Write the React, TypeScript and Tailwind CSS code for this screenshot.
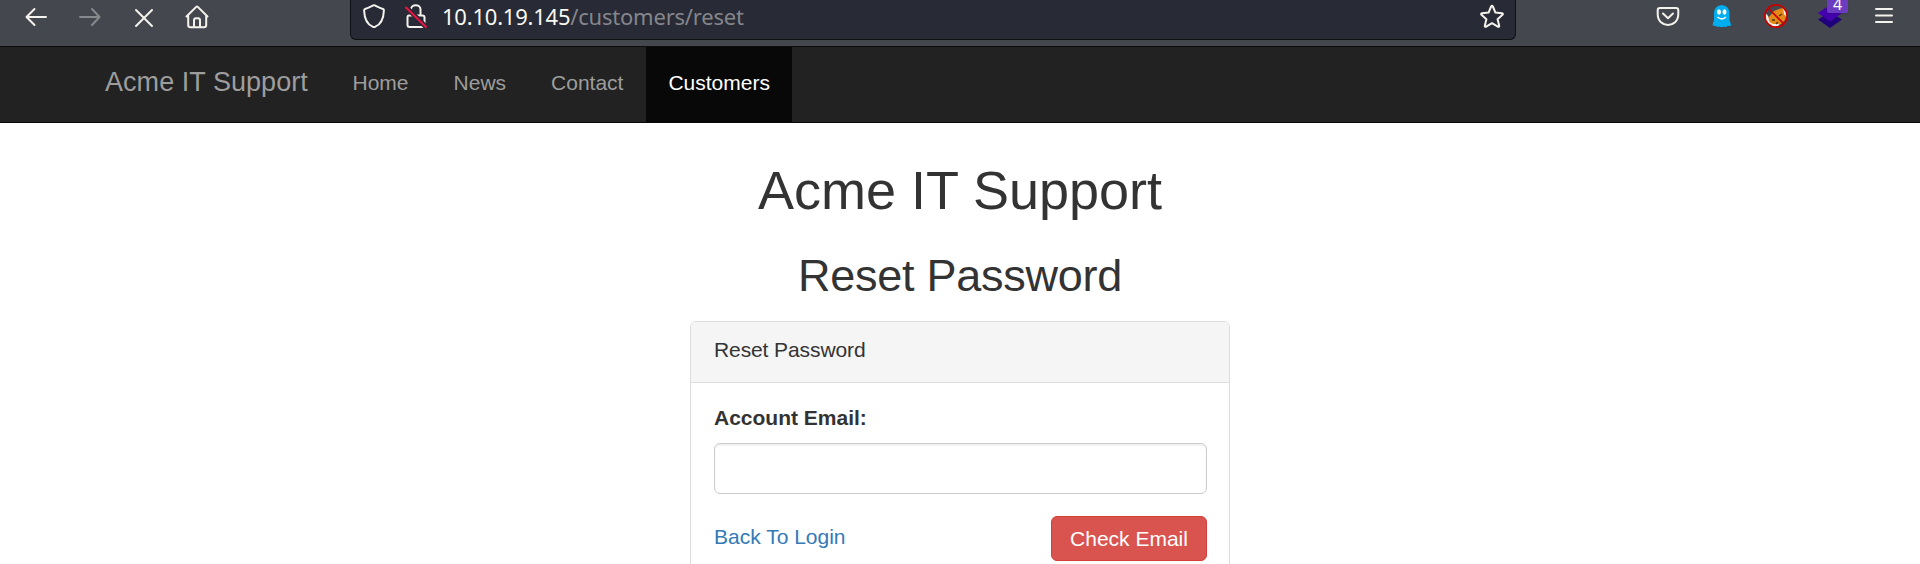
import React from "react";

const navItems = [
  { label: "Home", active: false },
  { label: "News", active: false },
  { label: "Contact", active: false },
  { label: "Customers", active: true },
];

const stroke = {
  fill: "none",
  stroke: "#f4f2ec",
  strokeWidth: 2,
  strokeLinecap: "round" as const,
  strokeLinejoin: "round" as const,
};

function BrowserBar() {
  return (
    <header className="flex h-[47px] items-start border-b border-[#0c0c0d] bg-[#44474e] font-['Noto_Sans',sans-serif]">
      <div className="flex w-[350px] shrink-0 pl-6">
        <svg className="mr-[30px] h-[34px] w-6" viewBox="0 0 24 34" {...stroke}>
          <path d="M22 17H2.500M10.500 9L2.500 17L10.500 25" />
        </svg>
        <svg className="mr-[30px] h-[34px] w-6" viewBox="0 0 24 34" {...stroke} stroke="#88898c">
          <path d="M2 17H21.500M14 9L21.500 17L14 25" />
        </svg>
        <svg className="mr-[29px] h-[34px] w-6" viewBox="0 0 24 34" {...stroke}>
          <path d="M4 10L20 26M20 10L4 26" />
        </svg>
        <svg className="h-[34px] w-6" viewBox="0 0 24 34" {...stroke}>
          <path d="M1.500 16.500L11.200 6.900Q12 6.100 12.800 6.900L22.500 16.500M3.200 15.500V25Q3.200 27.200 5.500 27.200H19Q21.200 27.200 21.200 25V15.500M9 27V20.500Q9 18.300 11 18.300H13Q15 18.300 15 20.500V27" />
        </svg>
      </div>
      <div className="flex h-10 w-[1166px] shrink-0 rounded-b-[6px] border border-t-0 border-[#0f1014] bg-[#282a36] pl-[11px] pr-[11px]">
        <svg className="h-[34px] w-6" viewBox="0 0 24 34" {...stroke}>
          <path d="M12 5.200C13 5.200 17 7.600 21 9Q21.900 9.300 21.900 10.500C21.600 18 18.600 24.500 13.300 26.700Q12 27.200 10.700 26.700C5.400 24.500 2.400 18 2.100 10.500Q2.100 9.300 3 9C7 7.600 11 5.200 12 5.200Z" />
        </svg>
        <svg className="ml-[18px] h-[34px] w-6" viewBox="0 0 24 34" {...stroke}>
          <path d="M7 15V9.500C7 3.800 16.500 3.800 16.500 9.500V15M5 15.500H18.500Q20.500 15.500 20.500 17.500V25Q20.500 27 18.500 27H5.500Q3.500 27 3.500 25V17.500Q3.500 15.500 5 15.500" />
          <path d="M1 6L23 28" stroke="#282a36" strokeWidth="5" />
          <path d="M2 7.500L22 27" stroke="#ef1242" />
        </svg>
        <p className="ml-[14px] flex-1 text-[22px] leading-[33px] tracking-[-0.22px] text-[#85868b]">
          <span className="text-[#f8f8f2]">10.10.19.145</span>/customers/reset
        </p>
        <svg className="h-[34px] w-6" viewBox="0 0 24 34" {...stroke}>
          <path d="M11.100 6.500Q12 5.100 12.900 6.500L15.400 12.600L22 13.200Q23.500 13.600 22.500 14.800L17.600 19.200L19.200 25.700Q19.300 27.300 17.800 26.700L12 23.200L6.200 26.700Q4.700 27.300 4.800 25.700L6.400 19.200L1.500 14.800Q.500 13.600 2 13.200L8.600 12.600Z" />
        </svg>
      </div>
      <div className="flex flex-1 pl-[140px]">
        <svg className="mr-[30px] h-[34px] w-6" viewBox="0 0 24 34" {...stroke}>
          <path d="M4 8H20Q22.300 8 22.300 10.300V14C22.300 28.500 1.700 28.500 1.700 14V10.300Q1.700 8 4 8ZM7 13.500L12 18.200L17 13.500" />
        </svg>
        <svg className="mr-[30px] h-[34px] w-6" viewBox="0 0 24 34">
          <path d="M2.500 25L4 20V13C4 2.500 19.500 2.500 19.500 13V20L21.200 25Q20 26.500 17.500 25.700Q16 28 13.800 26.500Q11.500 28 9.500 26.500Q7 27.800 6 25.700Q4 26.500 2.500 25Z" fill="#00aef0" />
          <ellipse cx="9" cy="12" rx="2" ry="2.700" fill="#fff" />
          <ellipse cx="14.500" cy="12" rx="2" ry="2.700" fill="#fff" />
          <path d="M7.500 17Q11.800 20.800 16 17" fill="none" stroke="#fff" strokeWidth="1.400" />
        </svg>
        <svg className="mr-[30px] h-[34px] w-6" viewBox="0 0 24 34">
          <path d="M1.500 14L5 17L10 11L15 9L19 8L22.500 14L21 20L17 24L11 26L5 24L2 20Z" fill="#e58a19" />
          <path d="M1.500 13L4 16L5.500 22L9 24L14 24L16 25L11 27L5 25L2 20ZM19 8L22.500 12L22.500 17L20 14Z" fill="#f5f2ed" />
          <path d="M8 20L11 20M15 16L18 14M12 24L14 22" stroke="#583411" strokeWidth="1.500" />
          <circle cx="12" cy="16" r="11.200" fill="none" stroke="#c90000" strokeWidth="1.700" />
          <path d="M4 8L20 24" stroke="#c90000" strokeWidth="1.700" />
        </svg>
        <div className="relative mr-[30px] h-[34px] w-6">
          <svg className="h-[34px] w-6" viewBox="0 0 24 34">
            <path d="M12 12L24 19.500L12 28L0 19.500Z" fill="#20007a" />
            <path d="M12 5L24 13L12 21.500L0 13Z" fill="#4500ad" />
          </svg>
          <span className="absolute top-0 left-[9px] h-[13px] w-[21px] rounded-b-[2px] bg-[#6b3cc0] text-center text-[16px] leading-[9px] text-white shadow-sm">4</span>
        </div>
        <svg className="h-[34px] w-6" viewBox="0 0 24 34" {...stroke}>
          <path d="M4 9H20M4 15.500H20M4 22H20" />
        </svg>
      </div>
    </header>
  );
}

function SiteNav() {
  return (
    <nav className="flex h-[76px] border-b border-[#080808] bg-[#222] pl-[105px] text-[#9d9d9d]">
      <a className="w-[225px] text-[27px] leading-[70px] tracking-[0.05px]" href="#">Acme IT Support</a>
      {navItems.map((item) => (
        <a
          key={item.label}
          href="#"
          className={
            item.active
              ? "bg-[#080808] px-[22.5px] text-[21px] leading-[72px] text-white"
              : "px-[22.5px] text-[21px] leading-[72px]"
          }
        >
          {item.label}
        </a>
      ))}
    </nav>
  );
}

function ResetPanel() {
  return (
    <section className="mx-auto mt-[20px] h-[300px] w-[540px] rounded-[6px] border border-[#ddd] bg-white">
      <h3 className="h-[61px] rounded-t-[5px] border-b border-[#ddd] bg-[#f5f5f5] px-[23px] text-[21px] leading-[56px] tracking-[-0.1px]">
        Reset Password
      </h3>
      <form className="pt-[19px] pr-[22px] pl-[23px]">
        <label htmlFor="email" className="block h-[41px] text-[21px] font-bold leading-[32px]">
          Account Email:
        </label>
        <input
          id="email"
          className="block h-[51px] w-full rounded-[6px] border border-[#ccc] bg-white shadow-[inset_0_1.5px_1.5px_rgba(0,0,0,0.075)] outline-none"
        />
        <div className="mt-[22px] flex items-start justify-between text-[21px]">
          <a href="#" className="leading-[42px] text-[#337ab7]">Back To Login</a>
          <button type="button" className="h-[45px] w-[156px] rounded-[6px] border border-[#d43f3a] bg-[#d9534f] text-white">
            Check Email
          </button>
        </div>
      </form>
    </section>
  );
}

export default function App() {
  return (
    <div className="h-[564px] overflow-hidden bg-white font-['Liberation_Sans',Arial,sans-serif] text-[#333]">
      <BrowserBar />
      <SiteNav />
      <main>
        <h1 className="pt-[38px] text-center text-[54px] leading-[59px]">Acme IT Support</h1>
        <h2 className="mt-[31px] text-center text-[45px] leading-[50px] tracking-[-0.25px]">Reset Password</h2>
        <ResetPanel />
      </main>
    </div>
  );
}
